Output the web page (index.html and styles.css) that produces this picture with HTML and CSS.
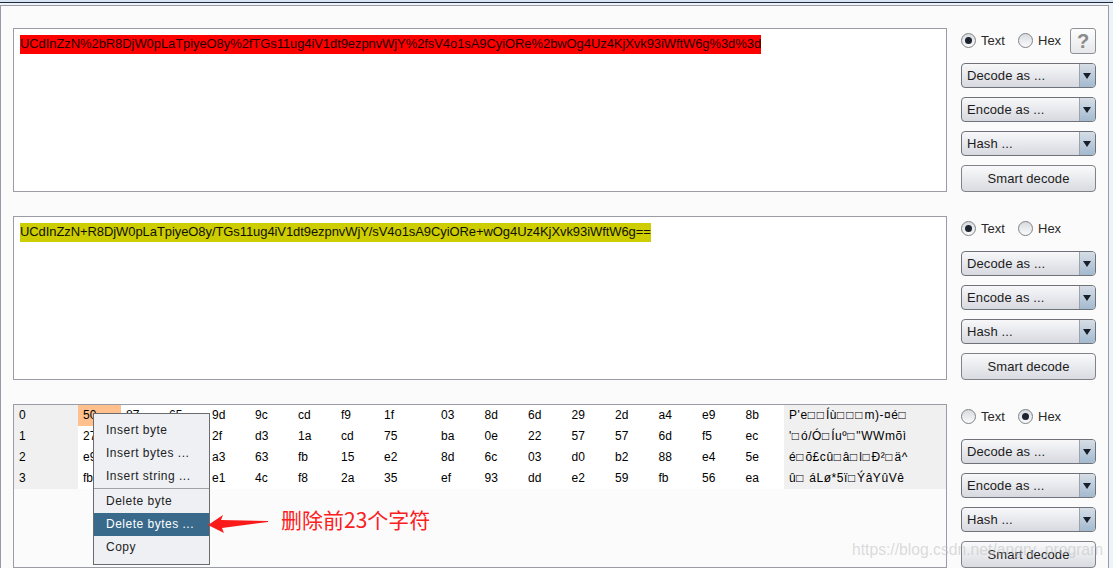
FILE: index.html
```
<!DOCTYPE html>
<html lang="en">
<head>
<meta charset="utf-8">
<title>Decoder</title>
<link rel="stylesheet" href="styles.css">
</head>
<body>
<div class="topbar"></div>
<main class="panel">
  <section class="row">
    <div class="editor"><span class="line red">UCdInZzN%2bR8DjW0pLaTpiyeO8y%2fTGs11ug4iV1dt9ezpnvWjY%2fsV4o1sA9CyiORe%2bwOg4Uz4KjXvk93iWftW6g%3d%3d</span></div>
    <div class="side">
      <div class="mode">
        <span class="radio on"></span><span class="lbl t">Text</span><span class="radio"></span><span class="lbl">Hex</span>
        <button class="help">?</button>
      </div>
      <div class="select"><span>Decode as ...</span><i></i></div>
      <div class="select"><span>Encode as ...</span><i></i></div>
      <div class="select"><span>Hash ...</span><i></i></div>
      <button class="smart">Smart decode</button>
    </div>
  </section>
  <section class="row">
    <div class="editor"><span class="line olive">UCdInZzN+R8DjW0pLaTpiyeO8y/TGs11ug4iV1dt9ezpnvWjY/sV4o1sA9CyiORe+wOg4Uz4KjXvk93iWftW6g==</span></div>
    <div class="side">
      <div class="mode">
        <span class="radio on"></span><span class="lbl t">Text</span><span class="radio"></span><span class="lbl">Hex</span>
      </div>
      <div class="select"><span>Decode as ...</span><i></i></div>
      <div class="select"><span>Encode as ...</span><i></i></div>
      <div class="select"><span>Hash ...</span><i></i></div>
      <button class="smart">Smart decode</button>
    </div>
  </section>
  <section class="row">
    <div class="editor hex">
      <div class="hexgrid">
        <div class="idx">0</div><div class="sel">50</div><div>87</div><div>65</div><div>9d</div><div>9c</div><div>cd</div><div>f9</div><div>1f</div><div>03</div><div>8d</div><div>6d</div><div>29</div><div>2d</div><div>a4</div><div>e9</div><div>8b</div><div class="asc">P'e<b>□□</b>Íù<b>□□□</b>m)-¤é<b>□</b></div>
        <div class="idx">1</div><div>27</div><div>8f</div><div>f3</div><div>2f</div><div>d3</div><div>1a</div><div>cd</div><div>75</div><div>ba</div><div>0e</div><div>22</div><div>57</div><div>57</div><div>6d</div><div>f5</div><div>ec</div><div class="asc">'<b>□</b>ó/Ó<b>□</b>Íuº<b>□</b>"WWmõì</div>
        <div class="idx">2</div><div>e9</div><div>90</div><div>f5</div><div>a3</div><div>63</div><div>fb</div><div>15</div><div>e2</div><div>8d</div><div>6c</div><div>03</div><div>d0</div><div>b2</div><div>88</div><div>e4</div><div>5e</div><div class="asc">é<b>□</b>õ£cû<b>□</b>â<b>□</b>l<b>□</b>Ð²<b>□</b>ä^</div>
        <div class="idx">3</div><div>fb</div><div>8a</div><div>20</div><div>e1</div><div>4c</div><div>f8</div><div>2a</div><div>35</div><div>ef</div><div>93</div><div>dd</div><div>e2</div><div>59</div><div>fb</div><div>56</div><div>ea</div><div class="asc">û<b>□</b> áLø*5ï<b>□</b>ÝâYûVê</div>
      </div>
    </div>
    <div class="side">
      <div class="mode">
        <span class="radio"></span><span class="lbl t">Text</span><span class="radio on"></span><span class="lbl">Hex</span>
      </div>
      <div class="select"><span>Decode as ...</span><i></i></div>
      <div class="select"><span>Encode as ...</span><i></i></div>
      <div class="select"><span>Hash ...</span><i></i></div>
      <button class="smart">Smart decode</button>
    </div>
  </section>
</main>
<div class="menu">
  <div class="item">Insert byte</div>
  <div class="item">Insert bytes ...</div>
  <div class="item">Insert string ...</div>
  <div class="sep"></div>
  <div class="item">Delete byte</div>
  <div class="item active">Delete bytes ...</div>
  <div class="item">Copy</div>
</div>
<svg class="arrow" width="62" height="20" viewBox="0 0 62 20"><path d="M0 11 L15 1 L13 6 L60 7 L60 8 L14 14 L16 19 Z" fill="#fb1a1a"/></svg>
<div class="note">删除前23个字符</div>
<div class="mark">https://blog.csdn.net/angry_program</div>
</body>
</html>
```
FILE: styles.css
```
* { box-sizing: border-box; }
html, body { margin: 0; height: 568px; overflow: hidden; }
body {
  width: 1113px;
  background: #eef3fa;
  font-family: "Liberation Sans", Arial, sans-serif;
  font-size: 12px;
  color: #000;
  position: relative;
}
.topbar { height: 3px; background: #d8e4f2; border-bottom: 1px solid #1c2a3c; }
.panel {
  width: 1109px;
  height: 565px;
  margin-top: 2px;
  border: 1px solid #989aa6;
  border-bottom: 0;
  background: #fbfbfb;
  padding: 22px 12px 0;
  display: flex;
  flex-direction: column;
  gap: 24px;
}
.row { display: flex; gap: 14px; height: 164px; flex: none; }
.editor {
  width: 934px;
  height: 164px;
  border: 1px solid #9a9ca6;
  background: #fff;
  padding: 6px;
  font-size: 13px;
  letter-spacing: -.08px;
  line-height: 20px;
}
.line { display: block; width: fit-content; height: 19px; line-height: 18px; white-space: nowrap; }
.red { background: #ff0000; color: #200; }
.olive { background: #cdcd00; color: #110; }
.side { width: 135px; flex: none; display: flex; flex-direction: column; }
.mode { height: 26px; padding-bottom: 2px; display: flex; align-items: center; margin-bottom: 9px; color: #222; }
.radio {
  width: 15px; height: 15px; border-radius: 50%; flex: none;
  border: 1px solid #7d8288;
  background: linear-gradient(#d8dade, #fbfbfb);
  position: relative;
}
.radio.on::after {
  content: ""; position: absolute; left: 3px; top: 3px; width: 7px; height: 7px;
  border-radius: 50%; background: #1c2430;
}
.lbl { margin-left: 5px; font-size: 13px; color: #2a2a2a; }
.lbl.t { width: 37px; }
.help {
  margin-left: auto; width: 26px; height: 26px; padding: 0; margin-bottom: -2px;
  border: 1px solid #8e9096; border-radius: 3px;
  background: linear-gradient(#fdfdfd, #e6e7ea);
  font: bold 20px "Liberation Sans", sans-serif; color: #8a8a8a;
}
.select {
  height: 25px; margin-bottom: 9px;
  border: 1px solid #6f7278; border-radius: 4px;
  background: linear-gradient(#f8f8fa, #d7d9e0);
  display: flex; align-items: center; justify-content: space-between;
  padding-left: 5px; font-size: 13px; letter-spacing: .12px; color: #1c1c1c;
  overflow: hidden;
}
.select i {
  width: 16px; height: 100%; flex: none; position: relative;
  background: linear-gradient(#d6dde6, #a3bacf);
  border-left: 1px solid #9aa2ac;
}
.select i::after {
  content: ""; position: absolute; left: 3px; top: 9px;
  border-left: 4px solid transparent; border-right: 4px solid transparent; border-top: 6px solid #15202c;
}
.smart {
  height: 27px; padding: 0;
  border: 1px solid #7f8288; border-radius: 4px;
  background: linear-gradient(#fafafb, #d9dbe1);
  font: 13px "Liberation Sans", sans-serif; letter-spacing: .08px; color: #1c1c1c;
}
.hex { padding: 0; background: #fbfbfb; letter-spacing: 0; }
.hexgrid {
  display: grid;
  grid-template-columns: 64px repeat(7, 43px) 57px repeat(7, 43.5px) 43.5px 1fr;
  grid-auto-rows: 21px;
  background: #fff;
  line-height: 21px;
  font-size: 12px;
}
.hexgrid > div { padding-left: 5px; }
.hexgrid .idx { background: #f0f0f0; }
.hexgrid .sel { background: #ffc08d; }
.hexgrid .asc { background: #f0f0f0; white-space: nowrap; overflow: hidden; letter-spacing: .55px; }
.asc b { font-weight: 400; letter-spacing: 1.9px; }
.menu {
  position: absolute; left: 93px; top: 413px; width: 117px; height: 152px;
  background: #eef0f4; border: 1px solid #6a6c70;
  padding-top: 5px; font-size: 12px; letter-spacing: .5px; color: #222;
}
.item { height: 23px; line-height: 22px; padding-left: 12px; white-space: nowrap; }
.item.active { background: #396a8c; color: #fff; }
.sep { height: 1px; background: #a0a2a8; margin: 0 0 1px; }
.arrow { position: absolute; left: 208px; top: 514px; }
.note {
  position: absolute; left: 281px; top: 506px; color: #fb2020;
  font: 21px/26px "Noto Sans CJK SC", "Liberation Sans", sans-serif;
}
.mark {
  position: absolute; left: 852px; top: 541px; font-size: 15.7px;
  color: rgba(190, 190, 190, .55); white-space: nowrap;
}
```
